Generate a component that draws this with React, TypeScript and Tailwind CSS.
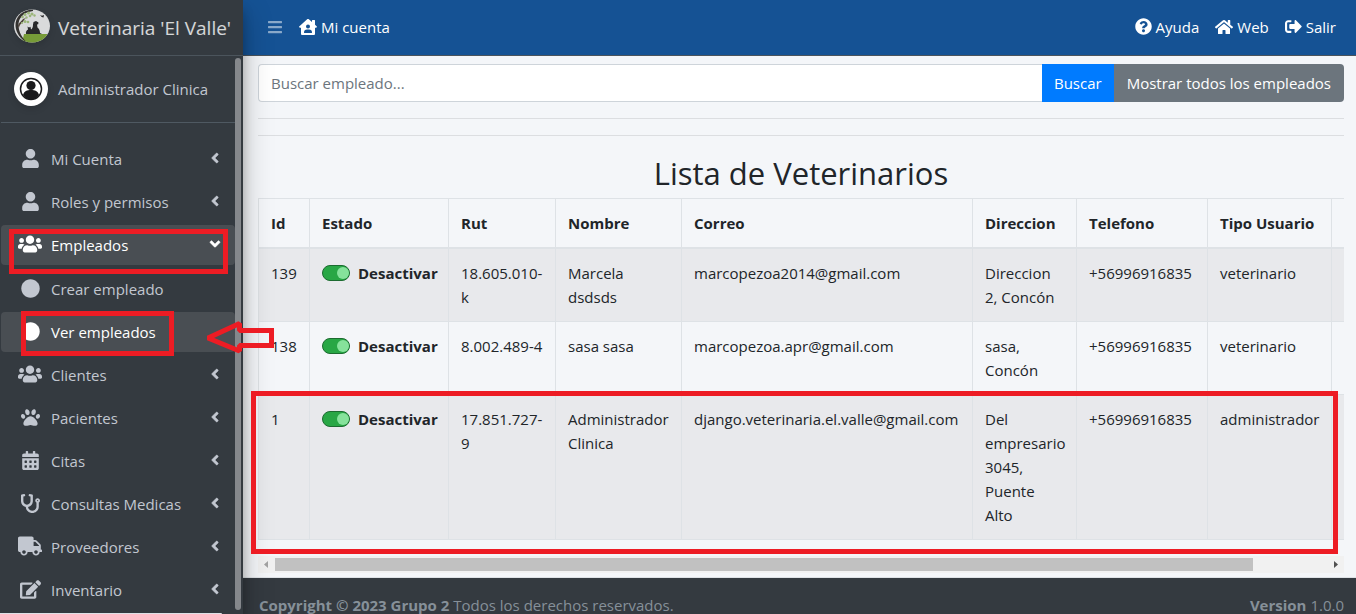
import React from 'react';
import {
  FaUser, FaUsers, FaCircle, FaPaw, FaCalendarAlt, FaStethoscope, FaTruck, FaEdit,
  FaAngleLeft, FaAngleDown, FaHouseUser, FaQuestionCircle, FaHome, FaSignOutAlt, FaBars,
} from 'react-icons/fa';

type Item = { label: string; icon: React.ReactNode; active?: boolean; leaf?: boolean };

const before: Item[] = [
  { label: 'Mi Cuenta', icon: <FaUser size={19} /> },
  { label: 'Roles y permisos', icon: <FaUser size={19} /> },
  { label: 'Empleados', icon: <FaUsers size={24} />, active: true },
];
const children: Item[] = [
  { label: 'Crear empleado', icon: <FaCircle size={19} />, leaf: true },
  { label: 'Ver empleados', icon: <FaCircle size={19} />, leaf: true, active: true },
];
const after: Item[] = [
  { label: 'Clientes', icon: <FaUsers size={24} /> },
  { label: 'Pacientes', icon: <FaPaw size={19} /> },
  { label: 'Citas', icon: <FaCalendarAlt size={19} /> },
  { label: 'Consultas Medicas', icon: <FaStethoscope size={19} /> },
  { label: 'Proveedores', icon: <FaTruck size={24} /> },
  { label: 'Inventario', icon: <FaEdit size={21} /> },
];

function NavItem({ item }: { item: Item }) {
  return (
    <li>
      <a
        href="#"
        className={`flex h-10 items-center rounded pl-[15px] pr-3 ${item.active ? 'bg-[#494e53] text-white' : 'text-[#c2c7d0]'}`}
      >
        <span className="flex w-7 shrink-0 justify-center pb-0.5">{item.icon}</span>
        <span className="ml-[7px] flex-1 whitespace-nowrap">{item.label}</span>
        {!item.leaf && (
          <span className="pb-0.5">
            {item.active
              ? <FaAngleDown size={16} stroke="currentColor" strokeWidth={16} />
              : <FaAngleLeft size={16} stroke="currentColor" strokeWidth={16} />}
          </span>
        )}
      </a>
    </li>
  );
}

function Logo() {
  return (
    <svg viewBox="0 0 36 34" className="h-[34px] w-9 drop-shadow-md" aria-hidden="true">
      <clipPath id="logo-clip"><ellipse cx="18" cy="17" rx="18" ry="16.5" /></clipPath>
      <g clipPath="url(#logo-clip)">
        <rect width="36" height="34" fill="#d9dadb" />
        <path d="M10 25h23v9H8z" fill="#779b38" />
        <path d="M19 .5C8 1 1 8 1.500 17c.5 7 5 13 11 16-4-4-8-10-8-17C4.500 9 9 3.500 19 2z" fill="#33312f" />
        <path d="M4 17c1-4 3-4 5-7l3-1-2 2c-1 3-4 3-5 8z" fill="#4b4039" />
        <g fill="#9bb57a">
          <circle cx="11" cy="5.500" r="1.500" /><circle cx="14.500" cy="4" r="1.500" /><circle cx="18" cy="5" r="1.600" />
          <circle cx="16" cy="7" r="1.300" /><circle cx="20.500" cy="6.500" r="1.200" /><circle cx="8.500" cy="8" r="1.300" />
          <circle cx="12.500" cy="8.500" r="1.200" /><circle cx="11" cy="12.500" r="1.500" /><circle cx="14" cy="13" r="1.300" />
          <circle cx="8" cy="14" r="1.100" />
        </g>
        <path d="M12 25c-.5-2 .5-4 2-4.500l-.5-3 1.500 1 1.500-.8.5 2.800c1.500-1 2-2.500 2-5l.5-2.500 2.500-1 2.500 1.500-.3 1.700-1.200.3.500 3c2 1.500 2.500 4 2.500 5.500l2 1z" fill="#29292b" />
        <path d="M26 6l2 .8L30 6l-.5 2.500-1.800-.5z" fill="#29292b" />
      </g>
    </svg>
  );
}

const columns = ['Id', 'Estado', 'Rut', 'Nombre', 'Correo', 'Direccion', 'Telefono', 'Tipo Usuario'];
const rows = [
  ['139', '18.605.010-k', 'Marcela dsdsds', 'marcopezoa2014@gmail.com', 'Direccion 2, Concón', '+56996916835', 'veterinario'],
  ['138', '8.002.489-4', 'sasa sasa', 'marcopezoa.apr@gmail.com', 'sasa, Concón', '+56996916835', 'veterinario'],
  ['1', '17.851.727-9', 'Administrador Clinica', 'django.veterinaria.el.valle@gmail.com', 'Del empresario 3045, Puente Alto', '+56996916835', 'administrador'],
];

function Toggle({ id }: { id: string }) {
  return (
    <label htmlFor={id} className="flex h-6 items-center gap-2 font-bold">
      <input id={id} type="checkbox" defaultChecked className="peer sr-only" />
      <span className="flex h-4 w-7 shrink-0 items-center justify-end rounded-full border border-[#1c6b30] bg-[#28a745]">
        <span className="size-3 rounded-full bg-[#86e29b]" />
      </span>
      Desactivar
    </label>
  );
}

export default function App() {
  return (
    <div className="relative flex h-screen overflow-hidden bg-[#f4f6f9] font-['Open_Sans',sans-serif] text-[15px] leading-6 text-[#212529]">
      <aside className="z-10 flex w-[243px] shrink-0 flex-col bg-[#343a40] shadow-[0_14px_28px_rgba(0,0,0,0.25),0_10px_10px_rgba(0,0,0,0.22)]">
        <a href="#" className="flex h-14 shrink-0 items-center gap-2 border-b border-[#4b545c] pl-3.5 text-[19px] text-white/80">
          <span className="pb-1"><Logo /></span>
          <span className="whitespace-nowrap">Veterinaria 'El Valle'</span>
        </a>
        <div className="flex min-h-0 flex-1">
          <div className="min-w-0 flex-1 overflow-hidden pl-px">
            <div className="flex h-[67px] items-center gap-2.5 border-b border-[#4f5962] pl-[13px] text-[#c2c7d0]">
              <svg viewBox="0 0 34 34" className="size-[34px] drop-shadow-md" aria-hidden="true">
                <circle cx="17" cy="17" r="17" fill="#fff" />
                <circle cx="17" cy="17" r="10.5" fill="none" stroke="#1a1a1c" strokeWidth="1.5" />
                <circle cx="17" cy="13.5" r="4.6" fill="#1a1a1c" />
                <path d="M9 23c1-4 4-5 8-5s7 1 8 5c-4 6-12 6-16 0z" fill="#1a1a1c" />
              </svg>
              <a href="#">Administrador Clinica</a>
            </div>
            <nav className="mt-4">
              <ul className="flex flex-col gap-[3px]">
                {before.map((i) => <NavItem key={i.label} item={i} />)}
                <li className="pt-px">
                  <ul className="flex flex-col gap-[3px]">
                    {children.map((i) => <NavItem key={i.label} item={i} />)}
                  </ul>
                </li>
                {after.map((i) => <NavItem key={i.label} item={i} />)}
              </ul>
            </nav>
          </div>
          <div className="mt-0.5 mr-0.5 mb-1 w-1.5 rounded-full bg-[#85888c]" />
        </div>
      </aside>

      <div className="flex min-w-0 flex-1 flex-col">
        <header className="flex h-14 shrink-0 items-center justify-between border-b border-[#4b545c] bg-[#155294] pb-0.5 pl-6 pr-5 text-white">
          <nav className="flex items-center gap-4">
            <button aria-label="Menu" className="text-white/50"><FaBars size={16} /></button>
            <a href="#" className="flex items-center gap-1"><FaHouseUser size={18} />Mi cuenta</a>
          </nav>
          <nav className="flex items-center gap-4">
            <a href="#" className="flex items-center gap-1"><FaQuestionCircle size={17} />Ayuda</a>
            <a href="#" className="flex items-center gap-1"><FaHome size={18} />Web</a>
            <a href="#" className="flex items-center gap-1"><FaSignOutAlt size={17} />Salir</a>
          </nav>
        </header>

        <main className="shrink-0 pl-[15px] pr-3 pb-1 pt-2">
          <form className="flex h-[38px]">
            <input
              type="text"
              aria-label="Buscar empleado"
              placeholder="Buscar empleado..."
              className="min-w-0 flex-1 rounded-l border border-r-0 border-[#ced4da] bg-white px-3 placeholder:text-[#6c757d]"
            />
            <button type="button" className="bg-[#007bff] px-3 text-white">Buscar</button>
            <button type="button" className="rounded-r bg-[#6c757d] px-[13px] text-white">Mostrar todos los empleados</button>
          </form>
          <hr className="mt-4 border-[#dcdee1]" />
          <hr className="mt-4 border-[#dcdee1]" />
          <h1 className="mt-[18px] mb-1.5 h-[38px] text-center text-[31px] font-medium leading-[38px]">Lista de Veterinarios</h1>
          <div className="overflow-hidden">
            <table className="w-[1168px] table-fixed border-separate border-spacing-0 border-l border-b border-[#dee2e6] text-left">
              <colgroup>
                <col className="w-[51px]" /><col className="w-[139px]" /><col className="w-[107px]" /><col className="w-[126px]" />
                <col className="w-[291px]" /><col className="w-[104px]" /><col className="w-[131px]" /><col className="w-[124px]" /><col />
              </colgroup>
              <thead>
                <tr>
                  {columns.map((c) => (
                    <th key={c} className="whitespace-nowrap border-t border-r border-b border-[#dee2e6] p-3 font-bold">{c}</th>
                  ))}
                  <td className="border-t border-b border-[#dee2e6]" />
                </tr>
              </thead>
              <tbody>
                {rows.map(([id, ...cells]) => (
                  <tr key={id} className="align-top odd:bg-[#e8e9ec]">
                    <td className="border-t border-r border-[#dee2e6] p-3">{id}</td>
                    <td className="border-t border-r border-[#dee2e6] p-3"><Toggle id={`estado-${id}`} /></td>
                    {cells.map((c, i) => (
                      <td key={i} className="border-t border-r border-[#dee2e6] p-3">{c}</td>
                    ))}
                    <td className="border-t border-[#dee2e6]" />
                  </tr>
                ))}
              </tbody>
            </table>
            <div className="mt-4 flex h-[17px] items-center bg-[#f1f1f1]">
              <svg viewBox="0 0 17 17" className="size-[17px]" aria-hidden="true"><path d="M10 5v7L6 8.5z" fill="#a3a3a3" /></svg>
              <div className="flex-1"><div className="h-[13px] w-[93%] bg-[#c1c1c1]" /></div>
              <svg viewBox="0 0 17 17" className="size-[17px]" aria-hidden="true"><path d="M7 5v7l4-3.5z" fill="#505050" /></svg>
            </div>
          </div>
        </main>

        <footer className="flex flex-1 justify-between border-t border-[#dee2e6] bg-[#343a40] pt-[19px] pl-4 pr-3 leading-4 text-[#869099]">
          <p className="whitespace-nowrap"><b>Copyright © 2023 Grupo 2</b> Todos los derechos reservados.</p>
          <p className="whitespace-nowrap"><b>Version</b> 1.0.0</p>
        </footer>
      </div>

      <div className="pointer-events-none absolute bottom-0 left-0 z-20 h-px w-[222px] rounded-tr bg-[#dee1e6]" />
      <div className="pointer-events-none absolute top-[229px] left-[9px] z-20 h-[45px] w-[219px] border-5 border-[#ed1c24]" />
      <div className="pointer-events-none absolute top-[311px] left-[21px] z-20 h-[45px] w-[153px] border-5 border-[#ed1c24]" />
      <div className="pointer-events-none absolute top-[391px] left-[251px] z-20 h-[163px] w-[1087px] border-5 border-[#ed1c24]" />
      <svg viewBox="0 0 70 34" className="pointer-events-none absolute top-[320px] left-[204px] z-20 h-[34px] w-[70px]" aria-hidden="true">
        <path d="M4 18L35.500 3.500v7h32v15h-32v5.500z" fill="none" stroke="#ed1c24" strokeWidth="5" strokeLinejoin="bevel" />
        <path d="M65 8h5v5h-5zM65 23h5v5h-5z" fill="#ed1c24" />
      </svg>
    </div>
  );
}
